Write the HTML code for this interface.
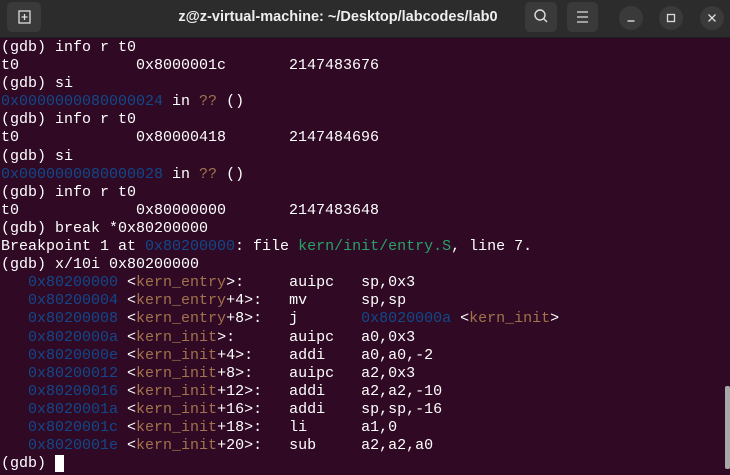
<!DOCTYPE html><html><head><style>
body{margin:0;width:730px;height:475px;overflow:hidden;background:#300a24;font-family:"Liberation Sans",sans-serif}
.tb{position:absolute;left:0;top:0;width:730px;height:37px;background:#2c2c2c;border-bottom:1px solid #1e1e1e}
.title{position:absolute;left:0;width:676px;top:9px;text-align:center;color:#eee;font-weight:bold;font-size:14.5px;z-index:2;white-space:nowrap}
.btn{position:absolute;top:2px;width:32px;height:30px;background:#3a3a3a;border-radius:5px}
.c{position:absolute;top:6px;width:24px;height:24px;border-radius:50%;background:#3a3a3a}
pre{position:absolute;left:1px;top:39px;margin:0;font-family:"Liberation Mono",monospace;font-size:15px;line-height:18.09px;color:#fff}
.b{color:#12488b}.o{color:#a2734c}.g{color:#26a269}
.cur{background:#fff}
.sb{position:absolute;left:725px;top:386px;width:5px;height:83px;background:#a8a8a8;border-radius:2px}
</style></head><body>
<div class="tb">
<div class="btn" style="left:7px;width:34px"><svg width="34" height="30"><rect x="12" y="9" width="11" height="12" fill="none" stroke="#ddd" stroke-width="1.3"/><path d="M17.5 12v6M14.5 15h6" stroke="#ddd" stroke-width="1.3"/></svg></div>
<div class="title">z@z-virtual-machine: ~/Desktop/labcodes/lab0</div>
<div class="btn" style="left:525px"><svg width="32" height="30"><circle cx="15" cy="13" r="5" fill="none" stroke="#ddd" stroke-width="1.4"/><path d="M18.5 16.5l3.5 3.5" stroke="#ddd" stroke-width="1.4"/></svg></div>
<div class="btn" style="left:567px;width:31px"><svg width="31" height="30"><path d="M10 10h11M10 15h11M10 20h11" stroke="#ddd" stroke-width="1.3"/></svg></div>
<div class="c" style="left:619px"><svg width="24" height="24"><path d="M8.5 15h7" stroke="#ddd" stroke-width="1.4"/></svg></div>
<div class="c" style="left:659px"><svg width="24" height="24"><rect x="8.5" y="8.5" width="7" height="7" fill="none" stroke="#ddd" stroke-width="1.3"/></svg></div>
<div class="c" style="left:700px"><svg width="24" height="24"><path d="M8.5 8.5l7 7M15.5 8.5l-7 7" stroke="#ddd" stroke-width="1.3"/></svg></div>
</div>
<pre>(gdb) info r t0
t0             0x8000001c       2147483676
(gdb) si
<span class="b">0x0000000080000024</span> in <span class="o">??</span> ()
(gdb) info r t0
t0             0x80000418       2147484696
(gdb) si
<span class="b">0x0000000080000028</span> in <span class="o">??</span> ()
(gdb) info r t0
t0             0x80000000       2147483648
(gdb) break *0x80200000
Breakpoint 1 at <span class="b">0x80200000</span>: file <span class="g">kern/init/entry.S</span>, line 7.
(gdb) x/10i 0x80200000
   <span class="b">0x80200000</span> &lt;<span class="o">kern_entry</span>&gt;:     auipc   sp,0x3
   <span class="b">0x80200004</span> &lt;<span class="o">kern_entry</span>+4&gt;:   mv      sp,sp
   <span class="b">0x80200008</span> &lt;<span class="o">kern_entry</span>+8&gt;:   j       <span class="b">0x8020000a</span> &lt;<span class="o">kern_init</span>&gt;
   <span class="b">0x8020000a</span> &lt;<span class="o">kern_init</span>&gt;:      auipc   a0,0x3
   <span class="b">0x8020000e</span> &lt;<span class="o">kern_init</span>+4&gt;:    addi    a0,a0,-2
   <span class="b">0x80200012</span> &lt;<span class="o">kern_init</span>+8&gt;:    auipc   a2,0x3
   <span class="b">0x80200016</span> &lt;<span class="o">kern_init</span>+12&gt;:   addi    a2,a2,-10
   <span class="b">0x8020001a</span> &lt;<span class="o">kern_init</span>+16&gt;:   addi    sp,sp,-16
   <span class="b">0x8020001c</span> &lt;<span class="o">kern_init</span>+18&gt;:   li      a1,0
   <span class="b">0x8020001e</span> &lt;<span class="o">kern_init</span>+20&gt;:   sub     a2,a2,a0
(gdb) <span class="cur"> </span></pre>
<div class="sb"></div>
</body></html>
